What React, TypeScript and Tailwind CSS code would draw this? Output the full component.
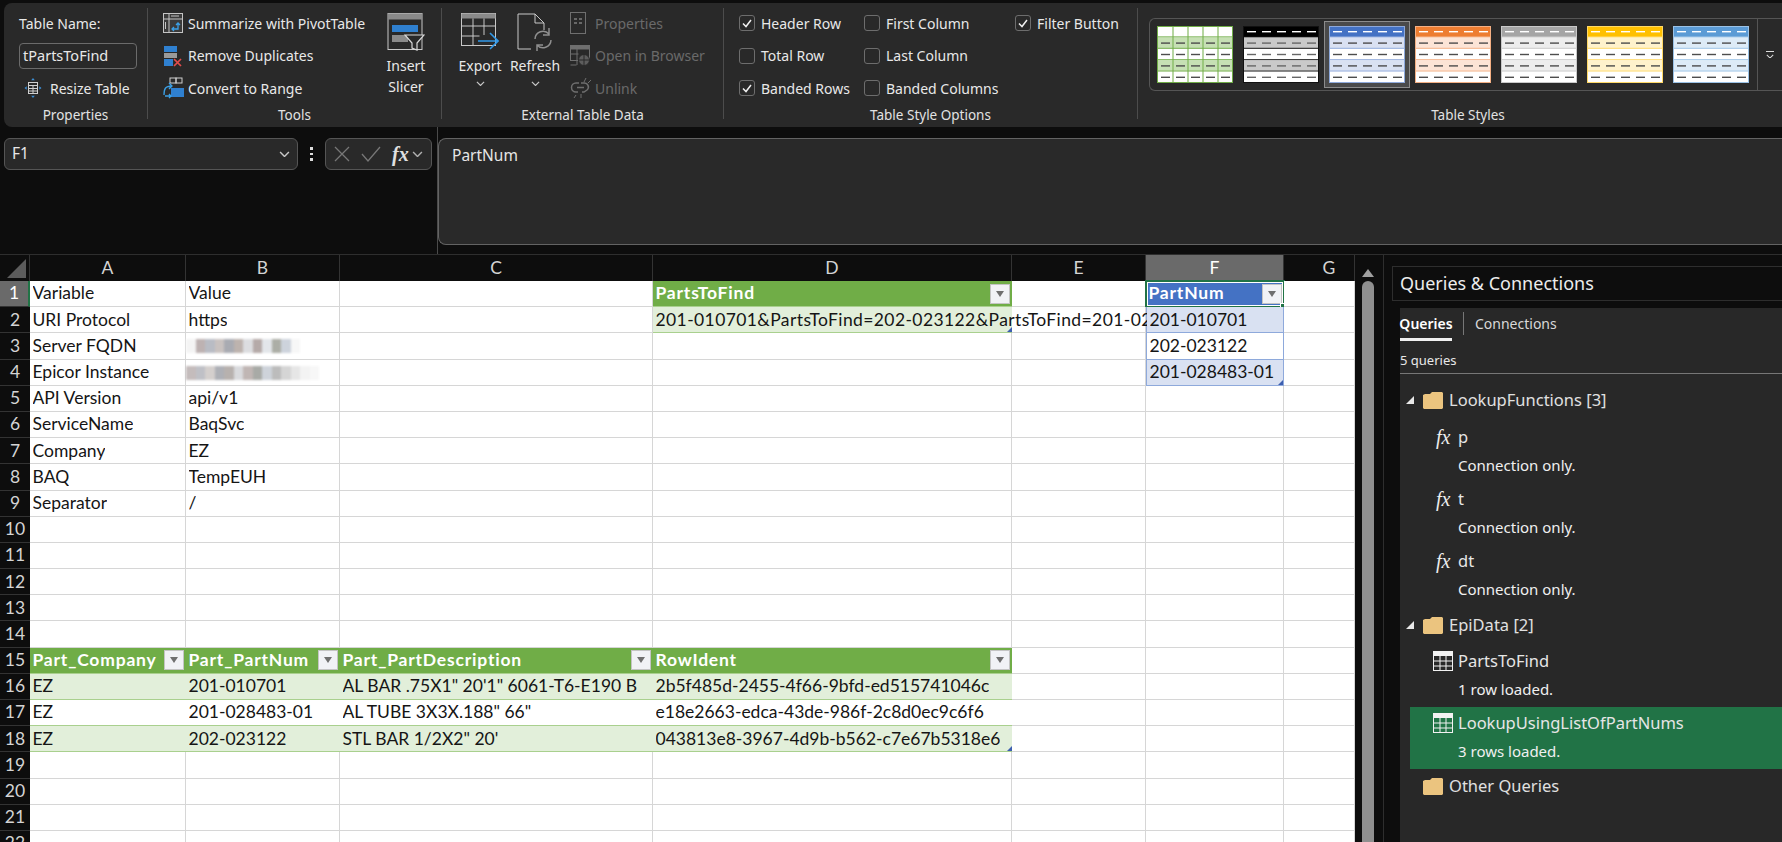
import type { ReactNode } from "react";

const uiFont = "font-['Noto_Sans',sans-serif]";
const cellFont = "font-['Lato',sans-serif]";

type Kind = "plain" | "head" | "headBlue" | "band" | "row" | "bandBlue" | "rowBlue";
type Cell = { t?: string; k?: Kind; filter?: boolean; mark?: boolean; wide?: boolean; blur?: string[] };

const columns = [
  { name: "A", width: "w-[156px]" },
  { name: "B", width: "w-[154px]" },
  { name: "C", width: "w-[313px]" },
  { name: "D", width: "w-[359px]" },
  { name: "E", width: "w-[134px]" },
  { name: "F", width: "w-[138px]" },
  { name: "G", width: "w-[71px]" },
];

const kindClass: Record<Kind, string> = {
  plain: "bg-white text-[#151515] border-r border-b border-[#d6d6d6]",
  head: "bg-[#70ad47] text-white font-bold tracking-[0.8px] border-b border-[#a9d08e]",
  headBlue: "bg-[#4472c4] text-white font-bold tracking-[0.8px] border-b border-[#8ea9db]",
  band: "bg-[#e2efda] text-[#151515] border-b border-[#a9d08e]",
  row: "bg-white text-[#151515] border-b border-[#a9d08e]",
  bandBlue: "bg-[#d9e1f2] text-[#151515] border-x border-b border-[#8ea9db]",
  rowBlue: "bg-white text-[#151515] border-x border-b border-[#8ea9db]",
};

const blurOne = ["bg-[#f4f4f4]", "bg-[#bdb2b2]", "bg-[#b9bcc4]", "bg-[#c9c2c0]", "bg-[#a9abb2]", "bg-[#bdb3ae]", "bg-[#dcdde0]", "bg-[#b5aaa8]", "bg-[#e3e6ea]", "bg-[#acaea6]", "bg-[#cdd3dc]", "bg-[#f7f7f7]"];
const blurTwo = ["bg-[#c4bcbc]", "bg-[#bfc0c6]", "bg-[#d4cfcd]", "bg-[#aeb0b6]", "bg-[#b7b1ae]", "bg-[#d9dadd]", "bg-[#c0b6b4]", "bg-[#a8aaa6]", "bg-[#ced3da]", "bg-[#bcbcbc]", "bg-[#d5d5d5]", "bg-[#e6e6e6]", "bg-[#f3f3f3]", "bg-[#f7f7f7]"];

const e: Cell = {};
const grid: Cell[][] = [
  [{ t: "Variable" }, { t: "Value" }, e, { t: "PartsToFind", k: "head", filter: true }, e, { t: "PartNum", k: "headBlue", filter: true }, e],
  [{ t: "URI Protocol" }, { t: "https" }, e, { t: "201-010701&PartsToFind=202-023122&PartsToFind=201-028483-01", k: "band", wide: true, mark: true }, { k: "plain" }, { t: "201-010701", k: "bandBlue" }, e],
  [{ t: "Server FQDN" }, { blur: blurOne }, e, e, e, { t: "202-023122", k: "rowBlue" }, e],
  [{ t: "Epicor Instance" }, { blur: blurTwo }, e, e, e, { t: "201-028483-01", k: "bandBlue", mark: true }, e],
  [{ t: "API Version" }, { t: "api/v1" }, e, e, e, e, e],
  [{ t: "ServiceName" }, { t: "BaqSvc" }, e, e, e, e, e],
  [{ t: "Company" }, { t: "EZ" }, e, e, e, e, e],
  [{ t: "BAQ" }, { t: "TempEUH" }, e, e, e, e, e],
  [{ t: "Separator" }, { t: "/" }, e, e, e, e, e],
  [e, e, e, e, e, e, e],
  [e, e, e, e, e, e, e],
  [e, e, e, e, e, e, e],
  [e, e, e, e, e, e, e],
  [e, e, e, e, e, e, e],
  [{ t: "Part_Company", k: "head", filter: true }, { t: "Part_PartNum", k: "head", filter: true }, { t: "Part_PartDescription", k: "head", filter: true }, { t: "RowIdent", k: "head", filter: true }, e, e, e],
  [{ t: "EZ", k: "band" }, { t: "201-010701", k: "band" }, { t: 'AL BAR .75X1" 20\'1" 6061-T6-E190 B', k: "band" }, { t: "2b5f485d-2455-4f66-9bfd-ed515741046c", k: "band" }, e, e, e],
  [{ t: "EZ", k: "row" }, { t: "201-028483-01", k: "row" }, { t: 'AL TUBE 3X3X.188" 66"', k: "row" }, { t: "e18e2663-edca-43de-986f-2c8d0ec9c6f6", k: "row" }, e, e, e],
  [{ t: "EZ", k: "band" }, { t: "202-023122", k: "band" }, { t: 'STL BAR 1/2X2" 20\'', k: "band" }, { t: "043813e8-3967-4d9b-b562-c7e67b5318e6", k: "band", mark: true }, e, e, e],
  [e, e, e, e, e, e, e],
  [e, e, e, e, e, e, e],
  [e, e, e, e, e, e, e],
  [e, e, e, e, e, e, e],
];

function PivotIcon() {
  return (
    <svg width="20" height="20" viewBox="0 0 20 20" fill="none">
      <rect x="0.5" y="0.5" width="19" height="19" fill="#3a3a3a" stroke="#c4c4c4" />
      <path d="M1 6h18M6 1v18" stroke="#c4c4c4" />
      <path d="M8 3h8M2.5 9v7" stroke="#c4c4c4" />
      <path d="M9 16h6V10M13 12l2-2 2 2M11 14l-2 2 2 2" stroke="#3ba0e6" strokeWidth="1.3" />
    </svg>
  );
}

function DuplicatesIcon() {
  return (
    <svg width="20" height="22" viewBox="0 0 20 22" fill="none">
      <rect x="1" y="1" width="13" height="6" fill="#2f80d0" />
      <rect x="1" y="8" width="13" height="5" fill="#9a9a9a" />
      <rect x="1" y="14" width="9" height="7" fill="#2f80d0" />
      <path d="M11 14l7 7M18 14l-7 7" stroke="#e34c4c" strokeWidth="1.7" />
    </svg>
  );
}

function ConvertIcon() {
  return (
    <svg width="22" height="22" viewBox="0 0 22 22" fill="none">
      <rect x="7" y="1" width="6" height="5" stroke="#cfcfcf" />
      <rect x="13" y="1" width="6" height="5" stroke="#cfcfcf" />
      <rect x="8" y="11" width="13" height="9" fill="#2f80d0" />
      <path d="M1 18c0-6 1-9 8-9M6 6l3 3-3 3M2 19h6M6 17l2 2-2 2" stroke="#3ba0e6" strokeWidth="1.3" />
    </svg>
  );
}

function ResizeIcon() {
  return (
    <svg width="18" height="22" viewBox="0 0 18 22" fill="none">
      <rect x="4.5" y="5.5" width="9" height="11" stroke="#d0d0d0" />
      <path d="M4.5 8.5h9M4.5 11.5h9M4.5 14h9M9 8.5v8" stroke="#d0d0d0" />
      <path d="M9 1l1.8 2.2H7.200zM9 21l1.800-2.200H7.200zM0.500 11l2.200-1.800v3.600zM17.500 11l-2.200-1.800v3.600z" fill="#3d8fd6" />
    </svg>
  );
}

function SlicerIcon() {
  return (
    <svg width="38" height="38" viewBox="0 0 38 38" fill="none">
      <rect x="1" y="0.5" width="34" height="36" stroke="#c8c8c8" />
      <rect x="1" y="0.5" width="34" height="6" fill="#8a8a8a" />
      <rect x="5" y="12" width="26" height="7" fill="#2f80d0" />
      <rect x="5" y="22" width="16" height="7" fill="#8a8a8a" />
      <path d="M18 22h19l-7 8v7l-5-2v-5z" fill="#292929" stroke="#d8d8d8" strokeWidth="1.2" />
    </svg>
  );
}

function ExportIcon() {
  return (
    <svg width="38" height="38" viewBox="0 0 38 38" fill="none">
      <rect x="0.5" y="0.5" width="34" height="32" stroke="#c8c8c8" />
      <rect x="0.5" y="0.5" width="34" height="5" fill="#8a8a8a" />
      <path d="M0.500 13h34M0.500 23h18M12 5.500V33M23 5.500V22" stroke="#c8c8c8" />
      <path d="M17 28h19M29 20l8 8-8 8" stroke="#3198e8" strokeWidth="1.6" />
    </svg>
  );
}

function RefreshIcon() {
  return (
    <svg width="36" height="38" viewBox="0 0 36 38" fill="none">
      <path d="M14 36H1V1h17l9 9v7M18 1v9h9" stroke="#c8c8c8" />
      <path d="M18 26a8 8 0 0 1 14-5M34 27a8 8 0 0 1-14 5M32 15v7h-6M20 38v-6h6" stroke="#8f8f8f" strokeWidth="1.5" />
    </svg>
  );
}

function PropsIcon() {
  return (
    <svg width="16" height="22" viewBox="0 0 16 22" fill="none">
      <rect x="0.500" y="0.500" width="15" height="21" stroke="#6f6f6f" />
      <path d="M4 7h3M4 11h3M9 7h3M9 11h3" stroke="#7d7d7d" strokeWidth="1.500" />
    </svg>
  );
}

function BrowserIcon() {
  return (
    <svg width="20" height="22" viewBox="0 0 20 22" fill="none">
      <rect x="0.500" y="0.500" width="19" height="15" stroke="#6f6f6f" />
      <rect x="0.500" y="0.500" width="19" height="4" fill="#6f6f6f" />
      <path d="M0.500 9h8M7 4v16M0.500 20h6" stroke="#6f6f6f" />
      <circle cx="14" cy="15" r="5.500" fill="#5d5d5d" stroke="#292929" />
      <path d="M8.500 15h11M14 9.500v11" stroke="#292929" />
    </svg>
  );
}

function UnlinkIcon() {
  return (
    <svg width="22" height="22" viewBox="0 0 22 22" fill="none">
      <path d="M9 6H6a4 4 0 0 0 0 9h2M11 6h3a4 4 0 0 1 3 7l-3 2h-2M7 10.500h7" stroke="#6f6f6f" strokeWidth="1.500" />
      <path d="M14 5l2-4M18 6l3-3M6 18l-2 3M11 17v4" stroke="#6f6f6f" />
    </svg>
  );
}

function FolderIcon() {
  return (
    <svg width="20" height="17" viewBox="0 0 20 17">
      <path d="M0 3l2-1h5l2-2h10l1 1v15l-1 1H1l-1-1z" fill="#ebc47f" />
    </svg>
  );
}

function TableIcon({ color }: { color: string }) {
  return (
    <svg width="20" height="20" viewBox="0 0 20 20" fill="none">
      <rect x="0.500" y="0.500" width="19" height="19" fill={color === "white" ? "#282828" : "#217346"} stroke="#f2f2f2" />
      <rect x="0.500" y="0.500" width="19" height="4.500" fill="#f2f2f2" />
      <path d="M1 10h18M1 15h18M7 5v14M13 5v14" stroke="#f2f2f2" />
    </svg>
  );
}

function Chevron({ color = "#c8c8c8", w = 10 }: { color?: string; w?: number }) {
  return (
    <svg width={w} height={w * 0.6} viewBox="0 0 10 6" fill="none">
      <path d="M1 1l4 4 4-4" stroke={color} strokeWidth="1.300" />
    </svg>
  );
}

function Swatch({ head, band, line, dash = "#4d4d4d", headDash = "#fff", cols }: { head: string; band: string; line: string; dash?: string; headDash?: string; cols?: boolean }) {
  return (
    <svg width="76" height="57" viewBox="0 0 76 57" className="shrink-0">
      <rect width="76" height="57" fill="#fff" />
      {[0, 1, 2, 3, 4].map((r) => (
        <g key={r}>
          <rect x="0" y={r * 11.4} width="76" height="11.4" fill={r === 0 ? head : r % 2 ? band : "#fff"} />
          <rect x="0" y={r * 11.4 + 10.4} width="76" height="1.200" fill={line} />
          {[0, 1, 2, 3, 4].map((c) => (
            <rect key={c} x={c * 15 + 4} y={r * 11.4 + 5} width="9" height="1.400" fill={r === 0 ? headDash : dash} />
          ))}
        </g>
      ))}
      {cols && [15, 30, 45, 60].map((x) => <rect key={x} x={x + 0.5} y="0" width="1" height="57" fill={line} />)}
      <rect x="0.500" y="0.500" width="75" height="56" fill="none" stroke={line} />
    </svg>
  );
}

function CheckOption({ label, checked }: { label: string; checked?: boolean }) {
  return (
    <div className="flex h-[32.5px] items-center gap-[6px] whitespace-nowrap">
      <span className="flex h-[16px] w-[16px] items-center justify-center rounded-[3px] border border-[#6d6d6d]">
        {checked && (
          <svg width="10" height="9" viewBox="0 0 10 9" fill="none">
            <path d="M1 4.500l3 3 5-6.500" stroke="#f0f0f0" strokeWidth="1.500" />
          </svg>
        )}
      </span>
      {label}
    </div>
  );
}

function RibbonGroup({ label, width, labelClass = "", children }: { label: string; width: string; labelClass?: string; children: ReactNode }) {
  return (
    <div className={`flex shrink-0 flex-col pt-[4px] ${width}`}>
      <div className="flex h-[98.5px]">{children}</div>
      <div className={`flex h-[20px] items-center justify-center text-[13.5px] text-[#e2e2e2] ${labelClass}`}>{label}</div>
    </div>
  );
}

function RibbonSep() {
  return <div className="mt-[5px] h-[111px] w-px shrink-0 bg-[#4c4c4c]" />;
}

function ListItem({ icon, label, dim }: { icon: ReactNode; label: string; dim?: boolean }) {
  return (
    <div className={`flex h-[32.5px] items-center whitespace-nowrap ${dim ? "text-[#6a6a6a]" : ""}`}>
      <span className="flex w-[25px] shrink-0 items-center">{icon}</span>
      {label}
    </div>
  );
}

function FilterButton() {
  return (
    <span className="ml-auto mr-[2px] flex h-[20px] w-[20px] shrink-0 items-center justify-center border border-[#c4c4c4] bg-[#f1f2f6]">
      <span className="h-0 w-0 border-x-[4.5px] border-t-[6px] border-x-transparent border-t-[#6f6f6f]" />
    </span>
  );
}

function SheetCell({ cell, width }: { cell: Cell; width: string }) {
  const kind = cell.k ?? "plain";
  return (
    <div className={`relative flex items-center pl-[2.5px] whitespace-nowrap ${width} ${kindClass[kind]}`}>
      {cell.wide ? <span className="block w-[491px] shrink-0 overflow-hidden tracking-[0.4px]">{cell.t}</span> : cell.t && <span className="overflow-hidden">{cell.t}</span>}
      {cell.filter && <FilterButton />}
      {cell.mark && <span className="absolute bottom-0 right-0 h-0 w-0 border-b-[5px] border-l-[5px] border-b-[#3d5fb0] border-l-transparent" />}
      {cell.blur && (
        <div className="absolute left-0 top-[6px] flex w-[190px] flex-wrap blur-[1px]">
          {cell.blur.map((c, i) => (
            <span key={i} className={`h-[14px] w-[9.5px] ${c}`} />
          ))}
        </div>
      )}
    </div>
  );
}

function QueryRow({ icon, name, desc, active }: { icon: ReactNode; name: string; desc: string; active?: boolean }) {
  return (
    <div className={`ml-[10px] flex h-[62px] ${active ? "bg-[#217346]" : ""}`}>
      <div className="ml-[23px] flex h-[32px] w-[25px] shrink-0 items-center">{icon}</div>
      <div className="flex flex-col">
        <div className="flex h-[32px] items-center text-[16.5px] text-[#e6e6e6]">{name}</div>
        <div className="flex h-[24px] items-center text-[15px] text-[#f0f0f0]">{desc}</div>
      </div>
    </div>
  );
}

function FolderRow({ name, open }: { name: string; open?: boolean }) {
  return (
    <div className="flex h-[30px] items-center text-[16.5px] text-[#e0e0e0]">
      <span className="ml-[6px] w-[17px] shrink-0">
        {open && <span className="block h-0 w-0 border-b-[8px] border-l-[8px] border-b-[#e8e8e8] border-l-transparent" />}
      </span>
      <span className="mr-[6px] flex w-[20px] shrink-0">
        <FolderIcon />
      </span>
      {name}
    </div>
  );
}

function FxGlyph({ tree }: { tree?: boolean }) {
  return <span className={`font-['Liberation_Serif',serif] text-[20px] italic ${tree ? "ml-[3px] font-normal text-[#ededed]" : "font-bold text-[#e0e0e0]"}`}>fx</span>;
}

export default function App() {
  return (
    <div className={`flex h-[842px] w-[1782px] flex-col overflow-hidden bg-[#0d0d0d] ${uiFont}`}>
      {/* ribbon */}
      <div className="ml-[4px] mt-[3px] flex h-[124px] shrink-0 rounded-l-lg bg-[#292929] text-[14px] text-[#e8e8e8]">
        <RibbonGroup label="Properties" width="w-[143px]">
          <div className="flex flex-col pl-[15px]">
            <div className="flex h-[32.5px] items-center">Table Name:</div>
            <div className="flex h-[32.5px] items-center">
              <div className="flex h-[26px] w-[118px] items-center rounded-[4px] border border-[#6b6b6b] pl-[3px] text-[14.5px]">tPartsToFind</div>
            </div>
            <div className="flex h-[32.5px] items-center pl-[5px]">
              <span className="mr-[8px] flex">
                <ResizeIcon />
              </span>
              Resize Table
            </div>
          </div>
        </RibbonGroup>
        <RibbonSep />
        <RibbonGroup label="Tools" width="w-[293px]">
          <div className="flex pl-[15px]">
            <div className="flex w-[224px] flex-col">
              <ListItem icon={<PivotIcon />} label="Summarize with PivotTable" />
              <ListItem icon={<DuplicatesIcon />} label="Remove Duplicates" />
              <ListItem icon={<ConvertIcon />} label="Convert to Range" />
            </div>
            <div className="flex w-[38px] flex-col items-center pt-[6px]">
              <SlicerIcon />
              <div className="mt-[4px] leading-[22px]">Insert</div>
              <div className="leading-[19px]">Slicer</div>
            </div>
          </div>
        </RibbonGroup>
        <RibbonSep />
        <RibbonGroup label="External Table Data" width="w-[281px]">
          <div className="flex pl-[19px]">
            <div className="flex w-[38px] flex-col items-center pt-[6px]">
              <ExportIcon />
              <div className="mt-[4px] leading-[22px]">Export</div>
              <div className="mt-[4px]">
                <Chevron w={9} />
              </div>
            </div>
            <div className="ml-[18px] flex w-[36px] flex-col items-center pt-[6px]">
              <RefreshIcon />
              <div className="mt-[4px] leading-[22px]">Refresh</div>
              <div className="mt-[4px]">
                <Chevron w={9} />
              </div>
            </div>
            <div className="ml-[17px] flex flex-col">
              <ListItem dim icon={<PropsIcon />} label="Properties" />
              <ListItem dim icon={<BrowserIcon />} label="Open in Browser" />
              <ListItem dim icon={<UnlinkIcon />} label="Unlink" />
            </div>
          </div>
        </RibbonGroup>
        <RibbonSep />
        <RibbonGroup label="Table Style Options" width="w-[413px]">
          <div className="flex pl-[15px]">
            <div className="w-[125px]">
              <CheckOption checked label="Header Row" />
              <CheckOption label="Total Row" />
              <CheckOption checked label="Banded Rows" />
            </div>
            <div className="w-[151px]">
              <CheckOption label="First Column" />
              <CheckOption label="Last Column" />
              <CheckOption label="Banded Columns" />
            </div>
            <div>
              <CheckOption checked label="Filter Button" />
            </div>
          </div>
        </RibbonGroup>
        <RibbonSep />
        <RibbonGroup label="Table Styles" width="flex-1" labelClass="pl-[16px]">
          <div className="ml-[11px] mt-[11px] flex h-[73px] flex-1">
            <div className="flex flex-1 items-center gap-[10px] rounded-l-md border border-r-0 border-[#555] pl-[7px]">
              <Swatch head="#fff" band="#c6e0b4" line="#70ad47" cols />
              <Swatch head="#000" band="#c9c9c9" line="#111" dash="#666" />
              <div className="flex shadow-[0_0_0_4px_#4a4a4a,0_0_0_5px_#8c8c8c]">
                <Swatch head="#4472c4" band="#d9e1f2" line="#8ea9db" />
              </div>
              <Swatch head="#ed7d31" band="#fce4d6" line="#f4b084" />
              <Swatch head="#a5a5a5" band="#ededed" line="#c9c9c9" />
              <Swatch head="#ffc000" band="#fff2cc" line="#ffd966" />
              <Swatch head="#5b9bd5" band="#ddebf7" line="#9bc2e6" />
            </div>
            <div className="flex w-[25px] flex-col items-center justify-center gap-[2px] border border-r-0 border-[#555]">
              <span className="h-px w-[8px] bg-[#ddd]" />
              <Chevron color="#ddd" w={8} />
            </div>
          </div>
        </RibbonGroup>
      </div>

      {/* formula bar */}
      <div className="flex h-[128px] shrink-0 border-b border-[#2e2e2e] pl-[4px] text-[15.5px] text-[#e6e6e6]">
        <div className="mt-[11px] flex h-[32px] w-[294px] items-center justify-between rounded-md border border-[#555] bg-[#292929] pl-[7px] pr-[7px]">
          F1
          <Chevron w={11} />
        </div>
        <div className="mt-[11px] flex h-[32px] w-[27px] flex-col items-center justify-center gap-[3px]">
          <span className="h-[2.5px] w-[2.5px] bg-[#ddd]" />
          <span className="h-[2.5px] w-[2.5px] bg-[#ddd]" />
          <span className="h-[2.5px] w-[2.5px] bg-[#ddd]" />
        </div>
        <div className="mt-[11px] flex h-[32px] w-[107px] items-center rounded-md border border-[#555] bg-[#292929] pl-[8px]">
          <svg width="16" height="16" viewBox="0 0 16 16" fill="none">
            <path d="M1 1l14 14M15 1L1 15" stroke="#777" strokeWidth="1.300" />
          </svg>
          <svg className="ml-[11px]" width="20" height="16" viewBox="0 0 20 16" fill="none">
            <path d="M1 8l6 7L19 1" stroke="#777" strokeWidth="1.300" />
          </svg>
          <span className="ml-[11px]">
            <FxGlyph />
          </span>
          <span className="ml-[3px]">
            <Chevron w={11} color="#b0b0b0" />
          </span>
        </div>
        <div className="ml-[5px] flex-1 border-l border-[#4a4a4a] pt-[11px]">
          <div className="h-[107px] rounded-l-lg border border-r-0 border-[#636363] bg-[#292929] pl-[13px] pt-[5px] leading-[22px]">PartNum</div>
        </div>
      </div>

      <div className="flex min-h-0 flex-1">
        {/* sheet */}
        <div className={`w-[1355px] shrink-0 overflow-hidden text-[17.5px] ${cellFont}`}>
          <div className="flex h-[26px] text-[#d4d4d4]">
            <div className="flex h-[26px] w-[30px] shrink-0 items-end justify-end border-r border-[#333] pb-[3px] pr-[3px]">
              <span className="h-0 w-0 border-b-[19px] border-l-[19px] border-b-[#5c5c5c] border-l-transparent" />
            </div>
            {columns.map((c) => (
              <div key={c.name} className={`flex items-center justify-center border-r border-[#333] ${c.width} ${c.name === "F" ? "bg-[#6a6a6a] text-white" : ""} ${c.name === "G" ? "pl-[20px]" : ""}`}>
                {c.name}
              </div>
            ))}
          </div>
          {grid.map((row, r) => (
            <div key={r} className="flex h-[26.2px]">
              <div className={`flex w-[30px] shrink-0 items-center justify-center border-b border-[#333] ${r === 0 ? "border-r-2 border-r-[#217346] bg-[#6a6a6a] text-white" : "text-[#d4d4d4]"}`}>{r + 1}</div>
              {row.map((cell, c) => (
                <div key={c} className={`relative flex ${columns[c].width} ${cell.wide ? "z-10" : ""}`}>
                  <SheetCell cell={cell} width="w-full" />
                  {r === 0 && c === 5 && (
                    <div className="absolute -inset-[1px] border-2 border-[#217346] shadow-[inset_0_0_0_1px_#fff]">
                      <span className="absolute -bottom-[4px] -right-[4px] h-[7px] w-[7px] border border-white bg-[#217346]" />
                    </div>
                  )}
                </div>
              ))}
            </div>
          ))}
        </div>

        {/* scroll bar */}
        <div className="flex w-[28px] shrink-0 flex-col items-center pt-[14px] pr-[2px]">
          <span className="h-0 w-0 border-x-[6px] border-b-[8px] border-x-transparent border-b-[#a0a0a0]" />
          <div className="mt-[4px] w-[12px] flex-1 rounded-t-md bg-[#8f8f8f]" />
        </div>

        {/* queries pane */}
        <div className="flex min-w-0 flex-1 flex-col border-l border-[#2e2e2e] pl-[8px] pt-[11px]">
          <div className="flex h-[35px] shrink-0 items-center border border-r-0 border-[#2e2e2e] pl-[7px] text-[18px] text-[#ececec]">Queries &amp; Connections</div>
          <div className="ml-[8px] mt-[7px] flex min-h-0 flex-1 flex-col bg-[#282828]">
            <div className="flex h-[33px] shrink-0 items-end text-[14px]">
              <div className="flex h-[33px] w-[52px] flex-col items-center justify-center border-b-[3px] border-[#f0f0f0] font-semibold text-white">Queries</div>
              <div className="mb-[6px] ml-[11px] h-[23px] w-px bg-[#777]" />
              <div className="ml-[11px] flex h-[33px] items-center pb-[3px] text-[#d8d8d8]">Connections</div>
            </div>
            <div className="flex h-[33px] shrink-0 items-center border-b border-[#777] pt-[8px] text-[13px] text-[#e8e8e8]">5 queries</div>
            <div className="flex flex-col pt-[11px]">
              <FolderRow open name="LookupFunctions [3]" />
              <div className="mt-[6px]">
                <QueryRow icon={<FxGlyph tree />} name="p" desc="Connection only." />
                <QueryRow icon={<FxGlyph tree />} name="t" desc="Connection only." />
                <QueryRow icon={<FxGlyph tree />} name="dt" desc="Connection only." />
              </div>
              <div className="mt-[3px]">
                <FolderRow open name="EpiData [2]" />
              </div>
              <div className="mt-[5px]">
                <QueryRow icon={<TableIcon color="white" />} name="PartsToFind" desc="1 row loaded." />
                <QueryRow active icon={<TableIcon color="green" />} name="LookupUsingListOfPartNums" desc="3 rows loaded." />
              </div>
              <div className="mt-[2px]">
                <FolderRow name="Other Queries" />
              </div>
            </div>
          </div>
        </div>
      </div>
    </div>
  );
}
